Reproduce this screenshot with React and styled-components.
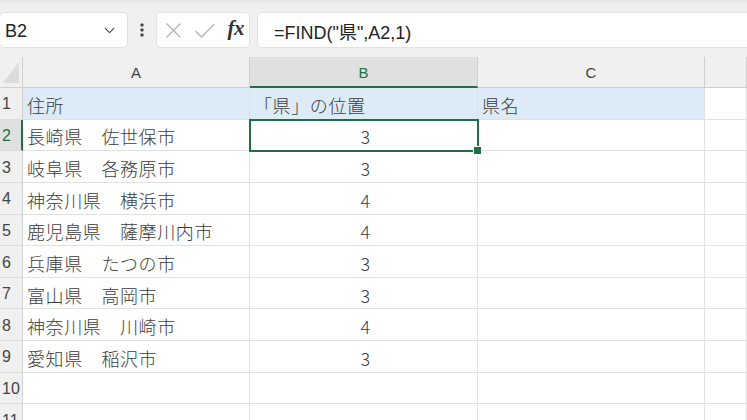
import React from "react";
import styled, { createGlobalStyle, css } from "styled-components";
import { ChevronDown } from "lucide-react";

const GREEN = "#1e7145";
const GRID = "#e1e1e1";
const HEAD_LINE = "#d0d0d0";
const JP = `"Noto Sans CJK JP", "Noto Sans", sans-serif`;

const GlobalStyle = createGlobalStyle`
  html, body { margin: 0; padding: 0; background: #f0f0f0; }
  body { font-family: ${JP}; color: #333; }
  * { box-sizing: border-box; }
`;

const rows = [
  ["住所", "「県」の位置", "県名"],
  ["長崎県　佐世保市", "3", ""],
  ["岐阜県　各務原市", "3", ""],
  ["神奈川県　横浜市", "4", ""],
  ["鹿児島県　薩摩川内市", "4", ""],
  ["兵庫県　たつの市", "3", ""],
  ["富山県　高岡市", "3", ""],
  ["神奈川県　川崎市", "4", ""],
  ["愛知県　稲沢市", "3", ""],
  ["", "", ""],
  ["", "", ""],
];

function App() {
  return (
    <Page>
      <GlobalStyle />
      <Toolbar>
        <NameBox>
          <span>B2</span>
          <ChevronDown size={17} strokeWidth={1.6} color="#444" />
        </NameBox>
        <Grip>
          <svg width="4" height="14" viewBox="0 0 4 14">
            <rect x="0.5" y="0.5" width="3" height="3" rx="0.8" fill="#444" />
            <rect x="0.5" y="5.5" width="3" height="3" rx="0.8" fill="#444" />
            <rect x="0.5" y="10.5" width="3" height="3" rx="0.8" fill="#444" />
          </svg>
        </Grip>
        <FuncBox>
          <svg width="17" height="17" viewBox="0 0 17 17">
            <path d="M1.5 1.5 L15.5 15.5 M15.5 1.5 L1.5 15.5" stroke="#b5b5b5" strokeWidth="1.3" fill="none" />
          </svg>
          <svg width="22" height="17" viewBox="0 0 22 17">
            <path d="M1.5 9 L7.5 15 L20.5 2" stroke="#b5b5b5" strokeWidth="1.3" fill="none" />
          </svg>
          <Fx>fx</Fx>
        </FuncBox>
        <FormulaBox>=FIND("県",A2,1)</FormulaBox>
      </Toolbar>

      <Sheet>
        <Corner />
        <ColHead>A</ColHead>
        <ColHead active>B</ColHead>
        <ColHead>C</ColHead>
        <ColHead />

        {rows.map((r, i) => (
          <React.Fragment key={i}>
            <RowHead active={i === 1}>{i + 1}</RowHead>
            <Cell band={i === 0}>{r[0]}</Cell>
            <Cell band={i === 0} center={i > 0} selected={i === 1}>{r[1]}</Cell>
            <Cell band={i === 0}>{r[2]}</Cell>
            <Cell />
          </React.Fragment>
        ))}
      </Sheet>
    </Page>
  );
}

export default App;

const Page = styled.div`
  width: 747px;
  height: 420px;
  overflow: hidden;
  background: #f0f0f0;
  border-top: 3px solid #e8e8e8;
`;

const Toolbar = styled.div`
  display: flex;
  align-items: flex-start;
  height: 54px;
  padding-top: 9px;
`;

const boxBase = css`
  height: 36px;
  background: #fff;
  border: 1px solid #e2e2e2;
  border-radius: 5px;
  display: flex;
  align-items: center;
`;

const NameBox = styled.div`
  ${boxBase};
  width: 129px;
  margin-left: -1px;
  padding: 0 9px 0 5px;
  justify-content: space-between;
  font-family: "Liberation Sans", "Noto Sans", sans-serif;
  font-size: 18px;
  color: #222;
  span { padding-top: 2px; }
`;

const Grip = styled.div`
  width: 28px;
  height: 36px;
  display: flex;
  align-items: center;
  justify-content: center;
`;

const FuncBox = styled.div`
  ${boxBase};
  width: 94px;
  padding: 0 5px 0 8px;
  justify-content: space-between;
`;

const Fx = styled.span`
  font-family: "Liberation Serif", "DejaVu Serif", serif;
  font-style: italic;
  font-weight: bold;
  font-size: 21px;
  color: #333;
  letter-spacing: -0.5px;
  padding-bottom: 4px;
`;

const FormulaBox = styled.div`
  ${boxBase};
  flex: 1;
  margin-left: 7px;
  margin-right: -10px;
  padding: 1px 0 0 16px;
  font-family: "Liberation Sans", ${JP};
  font-size: 18px;
  color: #222;
`;

const Sheet = styled.div`
  display: grid;
  grid-template-columns: 23px 227px 228px 227px 1fr;
  grid-template-rows: 31px;
  grid-auto-rows: 31.65px;
  background: #fff;
`;

const Corner = styled.div`
  position: relative;
  background: #f0f0f0;
  border-right: 1px solid ${HEAD_LINE};
  border-bottom: 1px solid ${HEAD_LINE};
  &::after {
    content: "";
    position: absolute;
    right: 3px;
    bottom: 4px;
    width: 16px;
    height: 21px;
    background: #dcdcdc;
    clip-path: polygon(100% 0, 100% 100%, 0 100%);
  }
`;

const ColHead = styled.div`
  display: flex;
  align-items: center;
  justify-content: center;
  font-family: "Liberation Sans", "Noto Sans", sans-serif;
  font-size: 15px;
  color: ${(p) => (p.active ? GREEN : "#444")};
  background: ${(p) => (p.active ? "#e0e0e0" : "#f0f0f0")};
  border-right: 1px solid ${HEAD_LINE};
  border-bottom: ${(p) => (p.active ? `2px solid ${GREEN}` : `1px solid ${HEAD_LINE}`)};
  padding-top: ${(p) => (p.active ? "2px" : "1px")};
`;

const RowHead = styled.div`
  display: flex;
  align-items: center;
  padding: 2px 0 0 2px;
  font-family: "Liberation Sans", "Noto Sans", sans-serif;
  font-size: 16px;
  color: ${(p) => (p.active ? GREEN : "#444")};
  background: ${(p) => (p.active ? "#e0e0e0" : "#f0f0f0")};
  border-right: ${(p) => (p.active ? `2px solid ${GREEN}` : `1px solid ${HEAD_LINE}`)};
  border-bottom: 1px solid #dcdcdc;
`;

const Cell = styled.div`
  position: relative;
  display: flex;
  align-items: center;
  justify-content: ${(p) => (p.center ? "center" : "flex-start")};
  padding: 3px 0 0 4px;
  font-size: 18px;
  font-weight: 300;
  letter-spacing: 0.6px;
  color: #3c3c3c;
  white-space: nowrap;
  background: ${(p) => (p.band ? "#ddebf7" : "#fff")};
  border-right: 1px solid ${GRID};
  border-bottom: 1px solid ${GRID};

  ${(p) =>
    p.selected &&
    css`
      z-index: 1;
      outline: 2px solid ${GREEN};
      outline-offset: -1px;
      &::after {
        content: "";
        position: absolute;
        right: -5px;
        bottom: -5px;
        width: 7px;
        height: 7px;
        background: ${GREEN};
        border: 1px solid #fff;
      }
    `}
`;
